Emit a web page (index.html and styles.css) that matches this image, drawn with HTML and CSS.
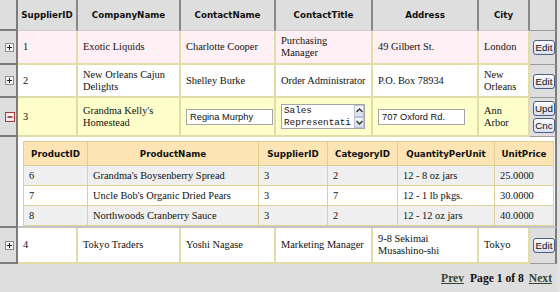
FILE: index.html
```html
<!DOCTYPE html>
<html lang="en">
<head>
<meta charset="utf-8"/>
<meta content="width=device-width, initial-scale=1.0" name="viewport"/>
<title>Suppliers</title>
<link rel="stylesheet" href="styles.css">
</head>
<body>
<table class="grid">
<thead>
<tr>
<th class="exp w-exp"></th>
<th class="w-id">SupplierID</th>
<th class="w-company">CompanyName</th>
<th class="w-contact">ContactName</th>
<th class="w-title">ContactTitle</th>
<th class="w-addr">Address</th>
<th class="w-city">City</th>
<th class="cmd w-cmd"></th>
</tr>
</thead>
<tbody>
<tr class="row-alt">
<td class="exp"><svg class="toggle" width="9" height="9" viewBox="0 0 9 9"><rect x="0.5" y="0.5" width="8" height="8" fill="#f4f4f4" stroke="#8c8c8c"/><path d="M2 4.5h5M4.5 2v5" stroke="#222"/></svg></td>
<td>1</td>
<td>Exotic Liquids</td>
<td>Charlotte Cooper</td>
<td>Purchasing Manager</td>
<td>49 Gilbert St.</td>
<td>London</td>
<td class="cmd"><button class="btn">Edit</button></td>
</tr>
<tr class="row-short">
<td class="exp"><svg class="toggle" width="9" height="9" viewBox="0 0 9 9"><rect x="0.5" y="0.5" width="8" height="8" fill="#f4f4f4" stroke="#8c8c8c"/><path d="M2 4.5h5M4.5 2v5" stroke="#222"/></svg></td>
<td>2</td>
<td>New Orleans Cajun Delights</td>
<td>Shelley Burke</td>
<td>Order Administrator</td>
<td>P.O. Box 78934</td>
<td>New Orleans</td>
<td class="cmd"><button class="btn">Edit</button></td>
</tr>
<tr class="row-edit">
<td class="exp"><svg class="toggle" width="10" height="10" viewBox="0 0 10 10"><rect x="0.5" y="0.5" width="9" height="9" fill="#fbeaea" stroke="#a83a3a"/><path d="M2.5 5h5" stroke="#7a1010" stroke-width="1.4"/></svg></td>
<td>3</td>
<td>Grandma Kelly's Homestead</td>
<td><input class="field" type="text" value="Regina Murphy"/></td>
<td>
<div class="memo">
<textarea class="memo-text" rows="2">Sales Representative</textarea>
<div class="memo-bar">
<span class="memo-arrow"><svg width="7" height="5" viewBox="0 0 7 5"><path d="M0.5 4L3.5 1L6.5 4" fill="none" stroke="#333" stroke-width="1.4"/></svg></span>
<span class="memo-arrow"><svg width="7" height="5" viewBox="0 0 7 5"><path d="M0.5 1L3.5 4L6.5 1" fill="none" stroke="#333" stroke-width="1.4"/></svg></span>
</div>
</div>
</td>
<td><input class="field" type="text" value="707 Oxford Rd."/></td>
<td>Ann Arbor</td>
<td class="cmd">
<div class="cmd-stack">
<button class="btn">Upd</button>
<button class="btn">Cnc</button>
</div>
</td>
</tr>
<tr class="row-detail">
<td class="exp"></td>
<td class="detail-cell" colspan="7">
<table class="detail">
<thead>
<tr>
<th class="d-id">ProductID</th>
<th class="d-name">ProductName</th>
<th class="d-sup">SupplierID</th>
<th class="d-cat">CategoryID</th>
<th class="d-qty">QuantityPerUnit</th>
<th class="d-price">UnitPrice</th>
</tr>
</thead>
<tbody>
<tr class="d-alt">
<td>6</td><td>Grandma's Boysenberry Spread</td><td>3</td><td>2</td><td>12 - 8 oz jars</td><td>25.0000</td>
</tr>
<tr>
<td>7</td><td>Uncle Bob's Organic Dried Pears</td><td>3</td><td>7</td><td>12 - 1 lb pkgs.</td><td>30.0000</td>
</tr>
<tr class="d-alt">
<td>8</td><td>Northwoods Cranberry Sauce</td><td>3</td><td>2</td><td>12 - 12 oz jars</td><td>40.0000</td>
</tr>
</tbody>
</table>
</td>
</tr>
<tr class="row-last">
<td class="exp"><svg class="toggle" width="9" height="9" viewBox="0 0 9 9"><rect x="0.5" y="0.5" width="8" height="8" fill="#f4f4f4" stroke="#8c8c8c"/><path d="M2 4.5h5M4.5 2v5" stroke="#222"/></svg></td>
<td>4</td>
<td>Tokyo Traders</td>
<td>Yoshi Nagase</td>
<td>Marketing Manager</td>
<td>9-8 Sekimai Musashino-shi</td>
<td>Tokyo</td>
<td class="cmd"><button class="btn">Edit</button></td>
</tr>
</tbody>
<tfoot>
<tr>
<td class="pager" colspan="8"><a href="#">Prev</a><span class="page-no">Page 1 of 8</span><a href="#">Next</a></td>
</tr>
</tfoot>
</table>
</body>
</html>
```

FILE: styles.css
```css
body {
  margin: 0;
  background: #e2e2e2;
  font-family: "Liberation Serif", serif;
  font-size: 10.4px;
  color: #111;
}
.grid {
  width: 557px;
  table-layout: fixed;
  border-collapse: separate;
  border-spacing: 0;
  background: #fff;
}
.grid th, .grid td {
  box-sizing: border-box;
}
.grid > thead th {
  height: 31px;
  background: #dedede;
  border-right: 2px solid #888;
  border-bottom: 1px solid #cfcfcf;
  font-family: "DejaVu Sans", sans-serif;
  font-size: 8.7px;
  font-weight: bold;
  color: #111;
  text-align: center;
}
.w-exp { width: 18px; }
.w-id { width: 60px; }
.w-company { width: 103px; }
.w-contact { width: 95px; }
.w-title { width: 97px; }
.w-addr { width: 106px; }
.w-city { width: 51px; }
.w-cmd { width: 27px; }

.grid > tbody > tr > td {
  height: 34px;
  padding: 3px 5px;
  line-height: 12px;
  border-right: 2px solid #e2dca6;
  border-bottom: 2px solid #e2dca6;
  vertical-align: middle;
}
.grid > tbody > tr.row-short > td { height: 33px; }
.grid > tbody > tr.row-edit > td { height: 39px; }
.grid > tbody > tr.row-last > td { height: 36px; }
.grid > tbody > tr > td.exp,
.grid > thead > tr > th.exp {
  background: #dedede;
  border-right: 2px solid #7c7c7c;
  border-bottom: 2px solid #7c7c7c;
  padding: 0;
  text-align: center;
}
.grid > tbody > tr > td.cmd,
.grid > thead > tr > th.cmd {
  background: #dedede;
  border-right: 2px solid #7c7c7c;
  border-bottom: 1px solid #9c9c9c;
  padding: 0 0 0 3px;
}
.toggle {
  display: block;
  margin: 0 0 0 5px;
}
.row-alt td { background: #fff0f5; }
.row-edit td { background: #ffffcc; }

.btn {
  display: block;
  width: 22px;
  height: 15px;
  padding: 0;
  border: 1px solid #4e5f86;
  border-radius: 3px;
  background: linear-gradient(#fbfbff, #dcdff0);
  font-family: "Liberation Sans", sans-serif;
  font-size: 9.8px;
  color: #111;
}
.cmd-stack {
  display: flex;
  flex-direction: column;
  gap: 2px;
}

.field {
  display: block;
  width: 87px;
  height: 16px;
  box-sizing: border-box;
  margin: 0;
  padding: 0 3px;
  border: 1px solid #a5a5a5;
  background: #fff;
  font-family: "Liberation Sans", sans-serif;
  font-size: 9.3px;
  color: #111;
}
.memo {
  display: flex;
  width: 84px;
  height: 25px;
  box-sizing: border-box;
  border: 1px solid #a5a5a5;
  background: #fff;
}
.memo-text {
  flex: 1;
  min-width: 0;
  margin: 0;
  padding: 0 2px;
  border: none;
  resize: none;
  overflow: hidden;
  font-family: "Liberation Mono", monospace;
  font-size: 9.3px;
  line-height: 11.5px;
  color: #111;
  background: #fff;
}
.memo-bar {
  display: flex;
  flex-direction: column;
  width: 10px;
}
.memo-arrow {
  flex: 1;
  display: flex;
  align-items: center;
  justify-content: center;
  border: 1px solid #b8c2d8;
  background: linear-gradient(#f6f8fc, #d7deec);
}

.grid > tbody > tr.row-detail > td.detail-cell {
  height: 91px;
  background: #fff;
  padding: 4px 3px 0 5px;
  border-right: 2px solid #7c7c7c;
  border-bottom: 2px solid #c4c4c4;
  vertical-align: top;
}
.detail {
  width: 530px;
  table-layout: fixed;
  border-collapse: separate;
  border-spacing: 0;
  border-left: 1px solid #dcd092;
  border-top: 1px solid #dcd092;
}
.detail th, .detail td {
  border-right: 1px solid #dcd092;
  border-bottom: 1px solid #dcd092;
  padding: 0 5px;
}
.detail th {
  height: 24px;
  background: #fde4b4;
  font-family: "DejaVu Sans", sans-serif;
  font-size: 8.7px;
  font-weight: bold;
  text-align: center;
}
.detail td {
  height: 20px;
  background: #fff;
}
.detail .d-alt td { background: #efefef; }
.d-id { width: 64px; }
.d-name { width: 171px; }
.d-sup { width: 69px; }
.d-cat { width: 70px; }
.d-qty { width: 97px; }
.d-price { width: 59px; }

.pager {
  height: 28px;
  background: #dedede;
  text-align: right;
  padding-right: 5px;
  font-size: 11.6px;
  font-weight: bold;
}
.pager a {
  color: #354535;
  text-decoration: underline;
}
.page-no {
  margin: 0 5px 0 6px;
  color: #111;
}
```
